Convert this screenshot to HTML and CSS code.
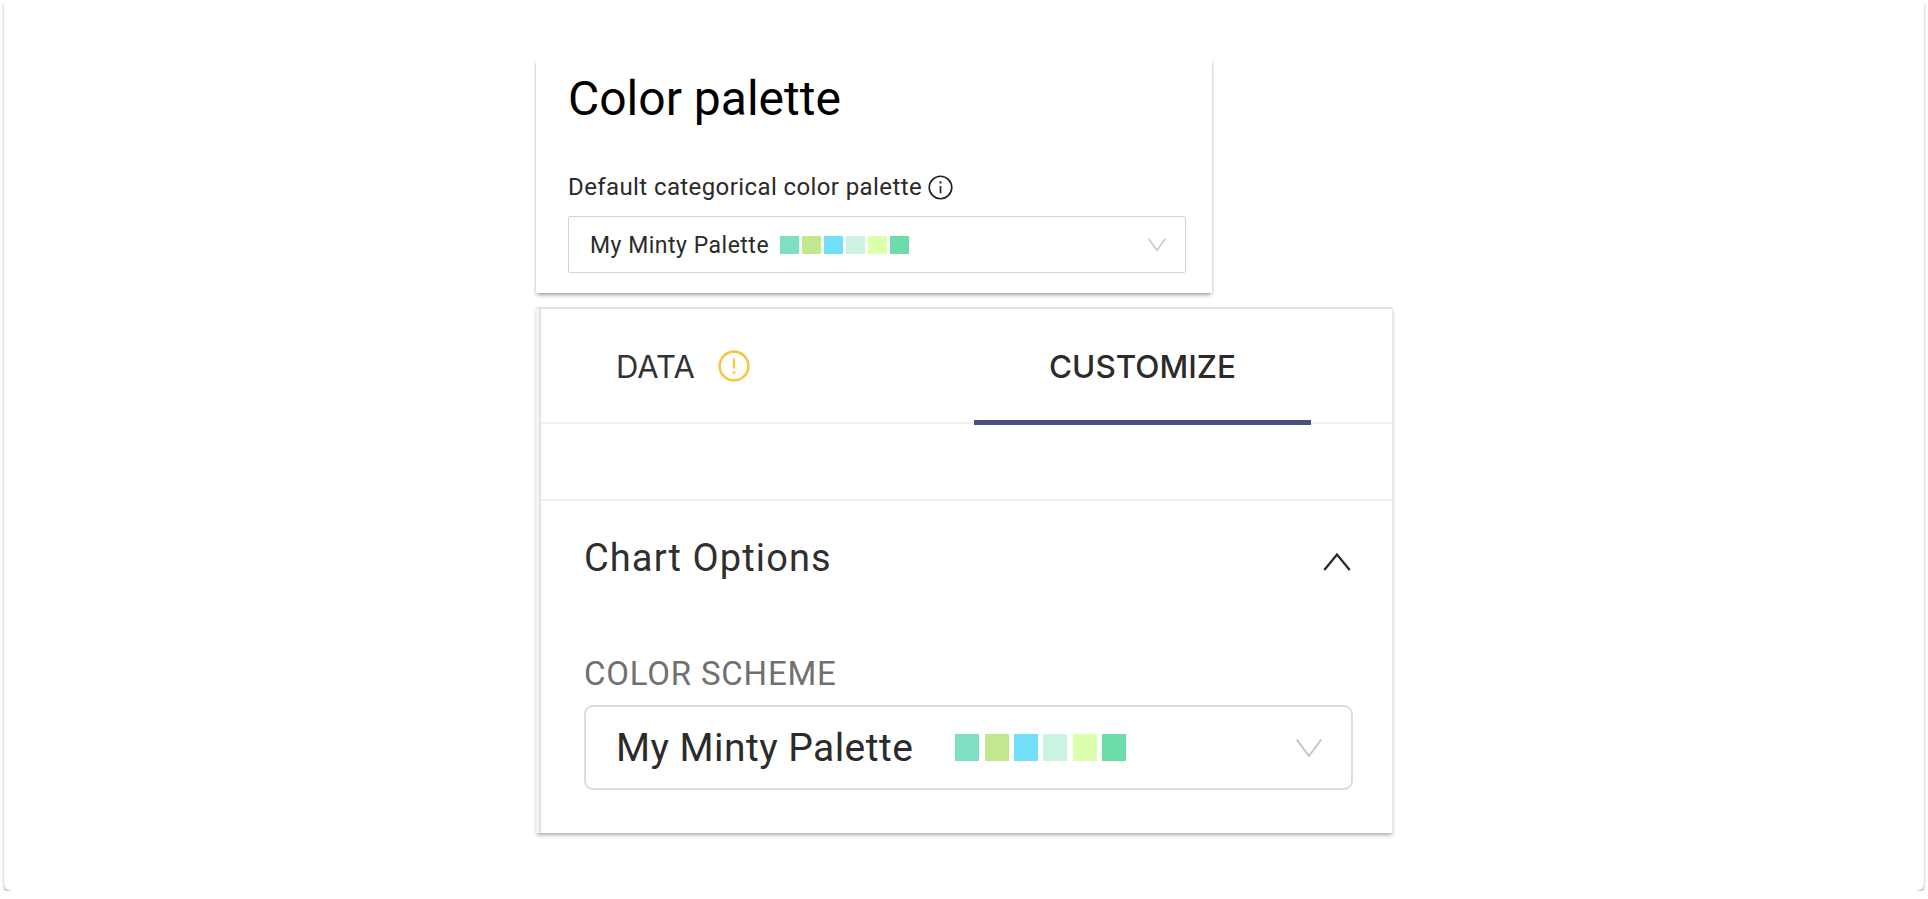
FILE: index.html
```html
<!DOCTYPE html>
<html lang="en">
<head>
    <meta charset="UTF-8">
    <title>Color palette</title>
    <link rel="stylesheet" href="styles.css">
</head>
<body>
    <div class="page">
        <div class="stack">
            <section class="settings-card">
                <h1>Color palette</h1>
                <div class="field-label">
                    <span>Default categorical color palette</span>
                    <svg class="info-icon" viewBox="0 0 24 24" fill="none" stroke="#222" stroke-width="1.6">
                        <circle cx="12" cy="12" r="10.8"/>
                        <path d="M12 10.6v7"/>
                        <path d="M12 6.2v1.9" stroke-width="2"/>
                    </svg>
                </div>
                <div class="select">
                    <span class="select-text">My Minty Palette</span>
                    <div class="swatches">
                        <i class="c1"></i><i class="c2"></i><i class="c3"></i><i class="c4"></i><i class="c5"></i><i class="c6"></i>
                    </div>
                    <svg class="chevron" viewBox="0 0 18 13" fill="none" stroke="#c4c4c4" stroke-width="1.4">
                        <path d="M.6.5 9 12.4 17.4.5"/>
                    </svg>
                </div>
            </section>

            <section class="panel">
                <div class="tabs">
                    <div class="tab tab-data">
                        <span>DATA</span>
                        <svg class="warn-icon" viewBox="0 0 32 32" fill="none" stroke="#f6c544" stroke-width="2.6">
                            <circle cx="16" cy="16" r="14.4"/>
                            <path d="M16 8.5v10" stroke-width="2.2"/>
                            <path d="M16 21.4v2.4" stroke-width="2.6"/>
                        </svg>
                    </div>
                    <div class="tab tab-active">CUSTOMIZE</div>
                </div>
                <div class="spacer"></div>
                <div class="options">
                    <div class="options-head">
                        <span>Chart Options</span>
                        <svg class="chevron-up" viewBox="0 0 26 17" fill="none" stroke="#2b2b2b" stroke-width="2.2">
                            <path d="M1 16 13 1.5 25 16"/>
                        </svg>
                    </div>
                    <div class="scheme-label">COLOR SCHEME</div>
                    <div class="select select-big">
                        <span class="select-text">My Minty Palette</span>
                        <div class="swatches">
                            <i class="c1"></i><i class="c2"></i><i class="c3"></i><i class="c4"></i><i class="c5"></i><i class="c6"></i>
                        </div>
                        <svg class="chevron" viewBox="0 0 26 18" fill="none" stroke="#c4c4c4" stroke-width="1.8">
                            <path d="M.8.6 13 17 25.2.6"/>
                        </svg>
                    </div>
                </div>
            </section>
        </div>
    </div>
</body>
</html>
```

FILE: styles.css
```css
* {
    box-sizing: border-box;
}
body {
    margin: 0;
    background-color: #fff;
    font-family: 'Roboto', sans-serif;
    color: #2b2b2b;
}
.page {
    height: 891px;
    margin: 0 4px;
    padding: 60px 0 0 532px;
    background-color: #fff;
    border-radius: 0 0 8px 8px;
    box-shadow: 0 4px 4px -1px rgba(0,0,0,0.34), 0 0 3px rgba(0,0,0,0.08);
}
.stack {
    width: 857px;
}
.settings-card {
    width: 676px;
    height: 233px;
    padding: 11px 26px 0 32px;
    background-color: #fff;
    box-shadow: 0 3px 4px -1px rgba(0,0,0,0.34), 0 0 3px rgba(0,0,0,0.14);
    clip-path: inset(0 -6px -8px -6px);
}
.settings-card h1 {
    margin: 0;
    font-size: 48px;
    line-height: 56px;
    font-weight: 400;
    color: #000;
}
.field-label {
    display: flex;
    align-items: center;
    gap: 6px;
    margin-top: 45px;
    height: 30px;
    font-size: 24px;
    letter-spacing: 0.4px;
    color: #2a2a2a;
}
.info-icon {
    width: 25px;
    height: 25px;
}
.select {
    display: flex;
    align-items: center;
    margin-top: 14px;
    height: 57px;
    padding: 0 19px 0 21px;
    border: 1px solid #d4d4d4;
    border-radius: 2px;
    font-size: 23px;
    letter-spacing: 0.5px;
}
.select-text {
    padding-top: 2px;
}
.swatches {
    display: flex;
    gap: 3px;
    margin-left: 11px;
}
.swatches i {
    display: block;
    width: 19px;
    height: 18px;
}
.c1 { background-color: #7fdfc3; }
.c2 { background-color: #c1e88c; }
.c3 { background-color: #72e0f8; }
.c4 { background-color: #ccf3df; }
.c5 { background-color: #dcffab; }
.c6 { background-color: #6bdcaa; }
.chevron {
    width: 18px;
    height: 13px;
    margin-left: auto;
}
.panel {
    width: 857px;
    height: 526px;
    margin-top: 14px;
    padding-left: 2px;
    border-top: 2px solid #e2e2e2;
    border-left: 3px solid #f3f3f3;
    border-right: 1px solid #e8e8e8;
    background-color: #fff;
    box-shadow: 0 3px 4px -1px rgba(0,0,0,0.34), inset 2px 0 0 #e2e2e2;
}
.tabs {
    display: flex;
    height: 115px;
    border-bottom: 2px solid #efefef;
    font-family: 'Inter', sans-serif;
    font-size: 31px;
}
.tab {
    display: flex;
    align-items: center;
    justify-content: center;
    height: 116px;
}
.tab-data {
    width: 433px;
    justify-content: flex-start;
    gap: 23px;
    padding: 0 0 2px 75px;
    color: #333;
}
.warn-icon {
    width: 32px;
    height: 32px;
}
.tab-active {
    width: 337px;
    padding-top: 4px;
    font-size: 31.5px;
    font-weight: 500;
    color: #2b2b2b;
    border-bottom: 5px solid #47507f;
}
.spacer {
    height: 77px;
    border-bottom: 2px solid #efefef;
}
.options {
    padding: 0 39px 0 43px;
}
.options-head {
    display: flex;
    align-items: center;
    justify-content: space-between;
    height: 114px;
    font-size: 38px;
    letter-spacing: 1.1px;
    color: #2f2f2f;
}
.chevron-up {
    width: 28px;
    height: 18px;
    margin: 8px 2px 0 0;
}
.scheme-label {
    margin-top: 41px;
    font-size: 33px;
    line-height: 36px;
    letter-spacing: 0.8px;
    color: #707070;
}
.select-big {
    margin-top: 13px;
    height: 85px;
    padding: 0 29px 0 30px;
    border: 2px solid #dcdcdc;
    border-radius: 9px;
    font-size: 39px;
    letter-spacing: 0.45px;
}
.select-big .select-text {
    padding-top: 0;
}
.select-big .swatches {
    gap: 5.4px;
    margin-left: 42px;
}
.select-big .swatches i {
    width: 24px;
    height: 27px;
}
.select-big .chevron {
    width: 26px;
    height: 18px;
}
```
